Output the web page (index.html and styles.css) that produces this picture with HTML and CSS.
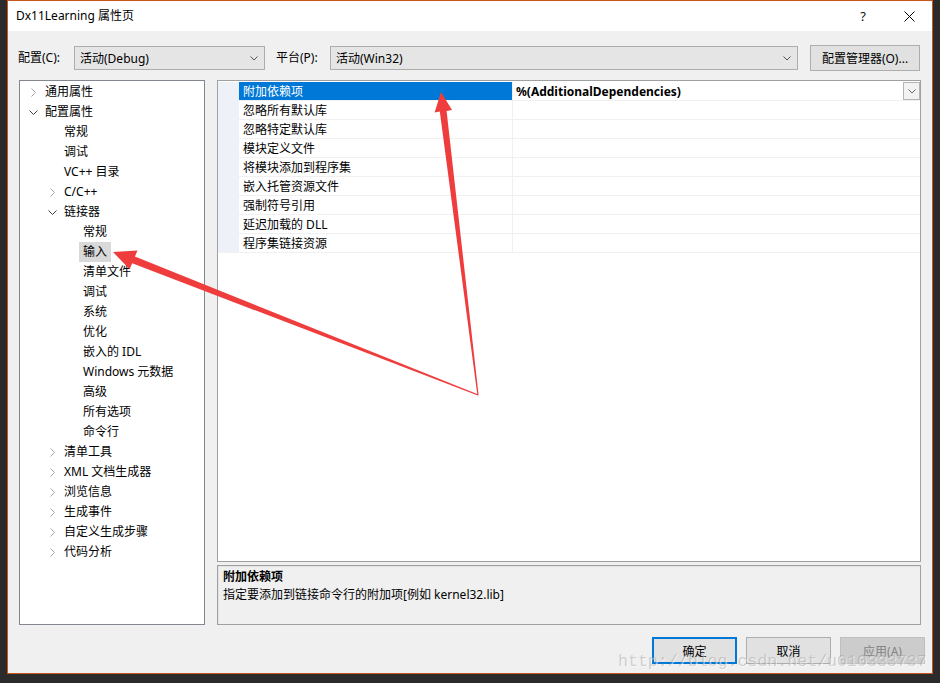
FILE: index.html
```html
<!DOCTYPE html>
<html lang="zh-CN">
<head>
<meta charset="utf-8">
<title>Dx11Learning 属性页</title>
<link rel="stylesheet" href="styles.css">
</head>
<body>
<div class="window">
  <div class="titlebar">
    <span class="title">Dx11Learning 属性页</span>
    <span class="tb-btn help">?</span>
    <span class="tb-btn close"><svg width="11" height="11" viewBox="0 0 11 11"><path d="M0.5 0.5 L10.5 10.5 M10.5 0.5 L0.5 10.5" stroke="#000" stroke-width="1" fill="none"/></svg></span>
  </div>

  <div class="toolbar">
    <span class="lbl lbl-conf">配置(C):</span>
    <div class="select sel-conf"><span>活动(Debug)</span><svg class="dd" width="8" height="5" viewBox="0 0 8 5"><polyline points="0.5,0.5 4,4 7.5,0.5" fill="none" stroke="#555"/></svg></div>
    <span class="lbl lbl-plat">平台(P):</span>
    <div class="select sel-plat"><span>活动(Win32)</span><svg class="dd" width="8" height="5" viewBox="0 0 8 5"><polyline points="0.5,0.5 4,4 7.5,0.5" fill="none" stroke="#555"/></svg></div>
    <div class="btn btn-mgr">配置管理器(O)...</div>
  </div>

  <div class="main">
    <div class="tree">
      <div class="node l0"><span class="chev"><svg width="5" height="9" viewBox="0 0 5 9"><polyline points="0.5,0.5 4.5,4.5 0.5,8.5" fill="none" stroke="#a6a6a6"/></svg></span><span class="txt">通用属性</span></div>
      <div class="node l0"><span class="chev"><svg width="9" height="5" viewBox="0 0 9 5"><polyline points="0.5,0.5 4.5,4.5 8.5,0.5" fill="none" stroke="#404040"/></svg></span><span class="txt">配置属性</span></div>
      <div class="node l1"><span class="chev"></span><span class="txt">常规</span></div>
      <div class="node l1"><span class="chev"></span><span class="txt">调试</span></div>
      <div class="node l1"><span class="chev"></span><span class="txt">VC++ 目录</span></div>
      <div class="node l1"><span class="chev"><svg width="5" height="9" viewBox="0 0 5 9"><polyline points="0.5,0.5 4.5,4.5 0.5,8.5" fill="none" stroke="#a6a6a6"/></svg></span><span class="txt">C/C++</span></div>
      <div class="node l1"><span class="chev"><svg width="9" height="5" viewBox="0 0 9 5"><polyline points="0.5,0.5 4.5,4.5 8.5,0.5" fill="none" stroke="#404040"/></svg></span><span class="txt">链接器</span></div>
      <div class="node l2"><span class="chev"></span><span class="txt">常规</span></div>
      <div class="node l2"><span class="chev"></span><span class="txt sel">输入</span></div>
      <div class="node l2"><span class="chev"></span><span class="txt">清单文件</span></div>
      <div class="node l2"><span class="chev"></span><span class="txt">调试</span></div>
      <div class="node l2"><span class="chev"></span><span class="txt">系统</span></div>
      <div class="node l2"><span class="chev"></span><span class="txt">优化</span></div>
      <div class="node l2"><span class="chev"></span><span class="txt">嵌入的 IDL</span></div>
      <div class="node l2"><span class="chev"></span><span class="txt">Windows 元数据</span></div>
      <div class="node l2"><span class="chev"></span><span class="txt">高级</span></div>
      <div class="node l2"><span class="chev"></span><span class="txt">所有选项</span></div>
      <div class="node l2"><span class="chev"></span><span class="txt">命令行</span></div>
      <div class="node l1"><span class="chev"><svg width="5" height="9" viewBox="0 0 5 9"><polyline points="0.5,0.5 4.5,4.5 0.5,8.5" fill="none" stroke="#a6a6a6"/></svg></span><span class="txt">清单工具</span></div>
      <div class="node l1"><span class="chev"><svg width="5" height="9" viewBox="0 0 5 9"><polyline points="0.5,0.5 4.5,4.5 0.5,8.5" fill="none" stroke="#a6a6a6"/></svg></span><span class="txt">XML 文档生成器</span></div>
      <div class="node l1"><span class="chev"><svg width="5" height="9" viewBox="0 0 5 9"><polyline points="0.5,0.5 4.5,4.5 0.5,8.5" fill="none" stroke="#a6a6a6"/></svg></span><span class="txt">浏览信息</span></div>
      <div class="node l1"><span class="chev"><svg width="5" height="9" viewBox="0 0 5 9"><polyline points="0.5,0.5 4.5,4.5 0.5,8.5" fill="none" stroke="#a6a6a6"/></svg></span><span class="txt">生成事件</span></div>
      <div class="node l1"><span class="chev"><svg width="5" height="9" viewBox="0 0 5 9"><polyline points="0.5,0.5 4.5,4.5 0.5,8.5" fill="none" stroke="#a6a6a6"/></svg></span><span class="txt">自定义生成步骤</span></div>
      <div class="node l1"><span class="chev"><svg width="5" height="9" viewBox="0 0 5 9"><polyline points="0.5,0.5 4.5,4.5 0.5,8.5" fill="none" stroke="#a6a6a6"/></svg></span><span class="txt">代码分析</span></div>
    </div>

    <div class="right">
      <div class="grid">
        <div class="prow selected">
          <div class="gutter"></div>
          <div class="name">附加依赖项</div>
          <div class="value"><b>%(AdditionalDependencies)</b><span class="vbtn"><svg width="8" height="5" viewBox="0 0 8 5"><polyline points="0.5,0.5 4,4 7.5,0.5" fill="none" stroke="#666"/></svg></span></div>
        </div>
        <div class="prow"><div class="gutter"></div><div class="name">忽略所有默认库</div><div class="value"></div></div>
        <div class="prow"><div class="gutter"></div><div class="name">忽略特定默认库</div><div class="value"></div></div>
        <div class="prow"><div class="gutter"></div><div class="name">模块定义文件</div><div class="value"></div></div>
        <div class="prow"><div class="gutter"></div><div class="name">将模块添加到程序集</div><div class="value"></div></div>
        <div class="prow"><div class="gutter"></div><div class="name">嵌入托管资源文件</div><div class="value"></div></div>
        <div class="prow"><div class="gutter"></div><div class="name">强制符号引用</div><div class="value"></div></div>
        <div class="prow"><div class="gutter"></div><div class="name">延迟加载的 DLL</div><div class="value"></div></div>
        <div class="prow"><div class="gutter"></div><div class="name">程序集链接资源</div><div class="value"></div></div>
      </div>
      <div class="desc">
        <div class="desc-title">附加依赖项</div>
        <div class="desc-text">指定要添加到链接命令行的附加项[例如 kernel32.lib]</div>
      </div>
    </div>
  </div>

  <div class="buttons">
    <div class="btn dlg default">确定</div>
    <div class="btn dlg">取消</div>
    <div class="btn dlg disabled">应用(A)</div>
  </div>
</div>

<div class="watermark">http://blog.csdn.net/u010333737</div>

<svg class="arrows" width="940" height="683" viewBox="0 0 940 683">
  <polygon fill="#ef3d3d" points="478.6,395 446.6,111 452,110 441,92 434.6,112.4 439.8,111.6 477.4,395.2"/>
  <polygon fill="#ef3d3d" points="478.4,394.4 134.9,256.6 137.5,250.5 113,252 129.6,269.3 132.2,263.2 477.8,395.6"/>
</svg>
</body>
</html>
```

FILE: styles.css
```css
html, body {
  margin: 0;
  padding: 0;
}
body {
  background: #2b2b2b;
  width: 940px;
  height: 683px;
  overflow: hidden;
  position: relative;
  font-family: "Noto Sans", "Noto Sans CJK SC", sans-serif;
  font-size: 12px;
  color: #000;
}
.window {
  margin-left: 7px;
  width: 926px;
  height: 674px;
  box-sizing: border-box;
  border: 1px solid #c9571c;
  background: #f0f0f0;
  display: flex;
  flex-direction: column;
}
.titlebar {
  height: 30px;
  background: #fff;
  display: flex;
  align-items: center;
  padding-left: 8px;
  flex: none;
}
.title {
  flex: 1;
  font-size: 12px;
  line-height: 16px;
  margin-top: -1px;
}
.tb-btn {
  width: 46px;
  height: 30px;
  display: flex;
  align-items: center;
  justify-content: center;
}
.help {
  font-size: 13px;
  color: #111;
}
.toolbar {
  margin-top: 14px;
  height: 26px;
  display: flex;
  align-items: center;
  padding-left: 10px;
  flex: none;
}
.lbl {
  line-height: 16px;
}
.lbl-conf { width: 56px; }
.lbl-plat { width: 54px; margin-left: 11px; }
.select {
  height: 24px;
  box-sizing: border-box;
  border: 1px solid #adadad;
  background: #e5e5e5;
  display: flex;
  align-items: center;
  justify-content: space-between;
  padding: 0 6px 0 5px;
}
.sel-conf { width: 191px; }
.sel-plat { width: 468px; }
.btn {
  box-sizing: border-box;
  border: 1px solid #adadad;
  background: #e1e1e1;
  display: flex;
  align-items: center;
  justify-content: center;
}
.btn-mgr {
  margin-left: 12px;
  width: 110px;
  height: 26px;
}
.main {
  margin-top: 9px;
  height: 545px;
  display: flex;
  gap: 12px;
  padding: 0 11px;
  flex: none;
}
.tree {
  width: 186px;
  box-sizing: border-box;
  border: 1px solid #828790;
  background: #fff;
  padding-top: 1px;
}
.node {
  height: 20px;
  display: flex;
  align-items: center;
  line-height: 20px;
}
.node.l0 { padding-left: 7px; }
.node.l1 { padding-left: 26px; }
.node.l2 { padding-left: 45px; }
.chev {
  width: 12px;
  display: flex;
  align-items: center;
  justify-content: center;
  margin-right: 6px;
}
.txt {
  white-space: nowrap;
}
.txt.sel {
  background: #d9d9d9;
  padding: 0 4px;
  margin-left: -4px;
}
.right {
  width: 704px;
  display: flex;
  flex-direction: column;
  gap: 3px;
}
.grid {
  height: 482px;
  box-sizing: border-box;
  border: 1px solid #a0a0a0;
  background: #fff;
  padding-top: 1px;
}
.prow {
  display: grid;
  grid-template-columns: 21px 273px 1fr;
  height: 19px;
}
.gutter {
  background: #eef2f8;
}
.name, .value {
  border-bottom: 1px solid #f0f0f0;
  line-height: 20px;
  height: 18px;
  overflow: hidden;
}
.name {
  padding-left: 4px;
  white-space: nowrap;
}
.value {
  border-left: 1px solid #f0f0f0;
  padding-left: 3px;
  display: flex;
  justify-content: space-between;
  align-items: flex-start;
}
.prow.selected .name {
  background: #0078d7;
  color: #fff;
}
.value b {
  font-weight: bold;
}
.vbtn {
  width: 17px;
  height: 18px;
  box-sizing: border-box;
  border: 1px solid #b4b4b4;
  background: #f2f2f2;
  display: flex;
  align-items: center;
  justify-content: center;
}
.desc {
  height: 60px;
  box-sizing: border-box;
  border: 1px solid #a0a0a0;
  box-shadow: inset 1px 1px 0 #e3e3e3;
  background: #f0f0f0;
  padding: 2px 5px 0 5px;
  line-height: 18px;
}
.desc-title {
  font-weight: bold;
}
.buttons {
  margin-top: 12px;
  display: flex;
  justify-content: flex-end;
  gap: 9px;
  padding-right: 7px;
}
.btn.dlg {
  width: 85px;
  height: 27px;
}
.btn.dlg.default {
  border: 2px solid #0078d7;
}
.btn.dlg.disabled {
  background: #cccccc;
  border-color: #bfbfbf;
  color: #838383;
}
.watermark {
  position: absolute;
  left: 618px;
  top: 652px;
  font-family: "Liberation Mono", monospace;
  font-size: 16.6px;
  line-height: 20px;
  color: rgba(150, 150, 150, 0.4);
  text-shadow: 1px 1px 0 rgba(255, 255, 255, 0.5);
  white-space: nowrap;
}
.arrows {
  position: absolute;
  left: 0;
  top: 0;
  pointer-events: none;
}
```
